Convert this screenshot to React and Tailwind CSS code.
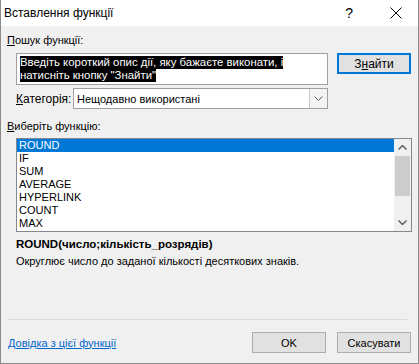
import React from "react";

const functions = ["ROUND", "IF", "SUM", "AVERAGE", "HYPERLINK", "COUNT", "MAX"];

const App = () => {
  return (
    <div
      className="w-[419px] h-[364px] flex flex-col bg-[#f0f0f0] border-l border-r border-b border-[#8a8a8a] text-[11px] text-black"
      style={{ fontFamily: '"Liberation Sans", Arial, sans-serif' }}
    >
      {/* title bar */}
      <div className="h-[26px] bg-white flex items-center pl-[3px] shrink-0">
        <span className="text-[12px] leading-[16px]">Вставлення функції</span>
        <span className="ml-auto mr-[37px] text-[14px] leading-[16px]">?</span>
        <svg className="mr-[16px]" width="12" height="12" viewBox="0 0 12 12">
          <path d="M0.5 0.5 L11.5 11.5 M11.5 0.5 L0.5 11.5" stroke="#000" strokeWidth="1" />
        </svg>
      </div>

      <div className="flex-1 flex flex-col px-[6px]">
        <div className="mt-[6px] leading-[16px]">
          <span className="underline">П</span>ошук функції:
        </div>

        <div className="flex pl-[9px] mt-[5px] gap-[9px]">
          <div className="w-[312px] h-[32px] bg-white border border-[#a0a0a0] pl-[3px] pt-[2px] text-[11.4px]">
            <div className="w-fit h-[13px] leading-[13px] bg-black text-white">
              Введіть короткий опис дії, яку бажаєте виконати, і
            </div>
            <div className="w-fit h-[13px] leading-[13px] bg-black text-white">натисніть кнопку "Знайти"</div>
          </div>
          <div className="w-[74px] h-[21px] bg-[#e1e1e1] border-2 border-[#0078d7] flex items-center justify-center text-[12px] leading-[16px]">
            З<span className="underline">н</span>айти
          </div>
        </div>

        <div className="flex items-center pl-[9px] mt-[3px]">
          <span className="text-[12px] leading-[16px]">
            <span className="underline">К</span>атегорія:
          </span>
          <div className="ml-auto mr-[84px] w-[255px] h-[21px] bg-white border border-[#a0a0a0] flex items-center">
            <span className="pl-[3px] leading-[16px]">Нещодавно використані</span>
            <div className="ml-auto h-full w-[18px] border-l border-[#c8c8c8] bg-[#f3f3f3] flex items-center justify-center">
              <svg width="9" height="5" viewBox="0 0 9 5">
                <path d="M0.5 0.5 L4.5 4.5 L8.5 0.5" fill="none" stroke="#5a5a5a" strokeWidth="1" />
              </svg>
            </div>
          </div>
        </div>

        <div className="mt-[9px] leading-[16px]">
          <span className="underline">В</span>иберіть функцію:
        </div>

        <div className="ml-[9px] mt-[4px] w-[396px] h-[94px] bg-white border border-[#828790] flex">
          <div className="flex-1 flex flex-col text-[11px]">
            {functions.map((f, i) => (
              <div
                key={f}
                className={
                  i === 0
                    ? "h-[13px] leading-[13px] pl-[2px] bg-[#0078d7] text-white"
                    : "h-[13px] leading-[13px] pl-[2px]"
                }
              >
                {f}
              </div>
            ))}
          </div>
          <div className="w-[17px] h-full bg-[#f0f0f0] flex flex-col items-center">
            <div className="h-[17px] flex items-center justify-center">
              <svg width="9" height="5" viewBox="0 0 9 5">
                <path d="M0.5 4.5 L4.5 0.5 L8.5 4.5" fill="none" stroke="#606060" strokeWidth="1.5" />
              </svg>
            </div>
            <div className="w-[15px] h-[40px] bg-[#cdcdcd]" />
            <div className="mt-auto h-[17px] flex items-center justify-center">
              <svg width="9" height="5" viewBox="0 0 9 5">
                <path d="M0.5 0.5 L4.5 4.5 L8.5 0.5" fill="none" stroke="#606060" strokeWidth="1.5" />
              </svg>
            </div>
          </div>
        </div>

        <div className="ml-[9px] mt-[4px] font-bold text-[11.5px] leading-[16px]">ROUND(число;кількість_розрядів)</div>
        <div className="ml-[9px] mt-[1px] leading-[16px]">Округлює число до заданої кількості десяткових знаків.</div>

        <div className="mt-auto ml-[1px] mr-[5px] border-t border-[#dadada]" />
        <div className="flex items-center h-[43px] pb-[10px] pt-[12px]">
          <span className="text-[#0066cc] underline leading-[16px] ml-[1px]">Довідка з цієї функції</span>
          <div className="ml-auto w-[74px] h-[21px] bg-[#e1e1e1] border border-[#adadad] flex items-center justify-center leading-[16px]">
            OK
          </div>
          <div className="ml-[11px] mr-[1px] w-[74px] h-[21px] bg-[#e1e1e1] border border-[#adadad] flex items-center justify-center leading-[16px]">
            Скасувати
          </div>
        </div>
      </div>
    </div>
  );
};

export default App;
